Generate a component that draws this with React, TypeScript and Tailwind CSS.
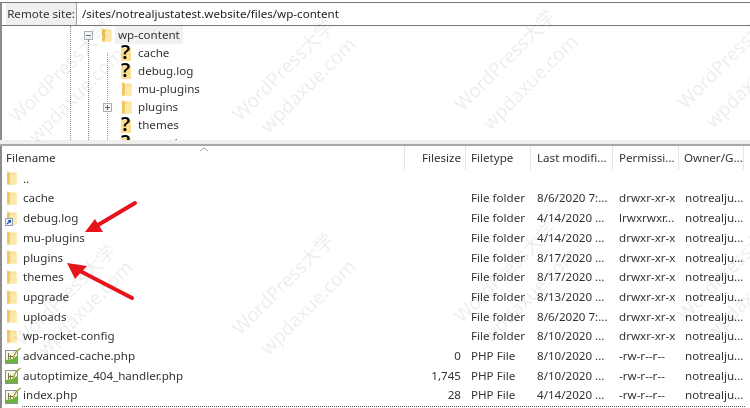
const font = { fontFamily: '"Noto Sans", "Noto Sans CJK SC", sans-serif' };

const files = [
  { name: '..', icon: 'folder' },
  { name: 'cache', icon: 'folder', type: 'File folder', date: '8/6/2020 7:...', perm: 'drwxr-xr-x' },
  { name: 'debug.log', icon: 'link', type: 'File folder', date: '4/14/2020 ...', perm: 'lrwxrwxr...' },
  { name: 'mu-plugins', icon: 'folder', type: 'File folder', date: '4/14/2020 ...', perm: 'drwxr-xr-x' },
  { name: 'plugins', icon: 'folder', type: 'File folder', date: '8/17/2020 ...', perm: 'drwxr-xr-x' },
  { name: 'themes', icon: 'folder', type: 'File folder', date: '8/17/2020 ...', perm: 'drwxr-xr-x' },
  { name: 'upgrade', icon: 'folder', type: 'File folder', date: '8/13/2020 ...', perm: 'drwxr-xr-x' },
  { name: 'uploads', icon: 'folder', type: 'File folder', date: '8/6/2020 7:...', perm: 'drwxr-xr-x' },
  { name: 'wp-rocket-config', icon: 'folder', type: 'File folder', date: '8/10/2020 ...', perm: 'drwxr-xr-x' },
  { name: 'advanced-cache.php', icon: 'php', size: '0', type: 'PHP File', date: '8/10/2020 ...', perm: '-rw-r--r--' },
  { name: 'autoptimize_404_handler.php', icon: 'php', size: '1,745', type: 'PHP File', date: '8/10/2020 ...', perm: '-rw-r--r--' },
  { name: 'index.php', icon: 'php', size: '28', type: 'PHP File', date: '4/14/2020 ...', perm: '-rw-r--r--' },
];

const tree = [
  { name: 'cache', icon: 'unknown' },
  { name: 'debug.log', icon: 'unknown' },
  { name: 'mu-plugins', icon: 'folder' },
  { name: 'plugins', icon: 'folder', plus: true },
  { name: 'themes', icon: 'unknown' },
  { name: 'upgrade', icon: 'unknown' },
];

// watermark centres
const marks = [
  [60, 72, 'WordPress大学'], [76, 95, 'wpdaxue.com'],
  [283, 70, 'WordPress大学'], [308, 85, 'wpdaxue.com'],
  [505, 60, 'WordPress大学'], [530, 82, 'wpdaxue.com'],
  [728, 58, 'WordPress大学'], [753, 80, 'wpdaxue.com'],
  [65, 295, 'WordPress大学'], [85, 308, 'wpdaxue.com'],
  [283, 284, 'WordPress大学'], [308, 307, 'wpdaxue.com'],
  [505, 272, 'WordPress大学'], [530, 295, 'wpdaxue.com'],
  [728, 270, 'WordPress大学'], [753, 292, 'wpdaxue.com'],
] as const;

function Folder() {
  return (
    <svg width="12" height="14" viewBox="0 0 12 14" className="shrink-0">
      <path d="M2 0.5 L5 1.5 H11.5 V13.5 H2 Z" fill="#fae09a" />
      <path d="M2 0.5 L5 1.5 V13.5 H2 Z" fill="#f2c85f" />
      <path d="M5 4 H11.5 V13.5 H5 Z" fill="#fce8a8" />
    </svg>
  );
}

function LinkFolder() {
  return (
    <div className="relative w-3 h-[14px] shrink-0">
      <Folder />
      <svg width="8" height="8" viewBox="0 0 8 8" className="absolute left-0 top-[7px]">
        <rect x="0.5" y="0.5" width="7" height="7" fill="#eef2fa" stroke="#8a9ac0" />
        <path d="M2 6 L5 3 M3.2 2.6 H5.4 V4.8" stroke="#1c4fb0" strokeWidth="1.2" fill="none" />
      </svg>
    </div>
  );
}

function PhpIcon() {
  return (
    <svg width="16" height="17" viewBox="0 0 16 17" className="shrink-0">
      <rect x="0.5" y="3.5" width="12" height="13" fill="#f6f6ea" stroke="#8f8f8f" />
      <path d="M1 16 V13 L7 12 L12 9 V16 Z" fill="#6fb23a" />
      <path d="M3.5 6 V12.5 M5.5 8 V12 M3 9.5 H8" stroke="#77793a" strokeWidth="1" />
      <path d="M8 11 L11 5 L15.5 1" stroke="#a3a83a" strokeWidth="1.5" fill="none" />
    </svg>
  );
}

function Unknown() {
  return (
    <div className="relative w-[13px] h-4 shrink-0">
      <div className="absolute left-[1px] top-[3px] w-[10px] h-[13px] bg-[#fbdf8f]" />
      <span className="absolute left-[1px] top-[-5px] text-[20px] leading-[24px] font-semibold text-black">?</span>
    </div>
  );
}

function Expander({ minus }: { minus?: boolean }) {
  return (
    <svg width="9" height="9" viewBox="0 0 9 9" className="shrink-0">
      <rect x="0.5" y="0.5" width="8" height="8" fill="#f4f6f8" stroke="#a9b2bb" />
      <path d={minus ? 'M2 4.5 H7' : 'M2 4.5 H7 M4.5 2 V7'} stroke="#5e6a75" strokeWidth="1" />
    </svg>
  );
}

function Column({ label, className }: { label: string; className: string }) {
  return (
    <div className={`${className} h-[24px] shrink-0 border-r border-[#e5e5e5] flex items-center`}>
      {label}
    </div>
  );
}

export default function App() {
  return (
    <div className="relative w-[750px] h-[408px] overflow-hidden bg-white text-[#333] text-[11.6px] blur-[0.3px]" style={font}>
      {/* remote site bar */}
      <div className="mt-[2px] h-[24px] flex border-t border-b border-[#777] border-l-2 border-l-[#8c8c8c]">
        <div className="w-[4px]" />
        <div className="w-[71px] bg-[#f0f0f0] flex items-center justify-center border-r border-[#a0a0a0] whitespace-nowrap">Remote site:</div>
        <div className="pl-[5px] flex items-center text-[#222]">/sites/notrealjustatest.website/files/wp-content</div>
      </div>

      {/* tree */}
      <div className="relative h-[114px] overflow-hidden border-l-2 border-l-[#8c8c8c]">
        <div className="absolute left-[68px] top-0 bottom-0 border-l border-dotted border-[#888]" />
        <div className="absolute left-[86px] top-[14px] bottom-0 border-l border-dotted border-[#888]" />
        <div className="absolute left-[105px] top-[27px] bottom-0 border-l border-dotted border-[#999]" />
        <div className="relative pl-[82px] h-[18px] flex items-center">
          <Expander minus />
          <div className="ml-[7px]"><Folder /></div>
          <span className="ml-[3px] px-[3px] h-[18px] flex items-center bg-[#f1f1f1]">wp-content</span>
        </div>
        {tree.map((t) => (
          <div key={t.name} className="relative h-[18px] flex items-center">
            <div className="w-[101px] shrink-0" />
            <div className="w-[9px] shrink-0">{t.plus && <Expander />}</div>
            <div className="w-[8px] shrink-0" />
            <div className="w-[18px] shrink-0">{t.icon === 'folder' ? <Folder /> : <Unknown />}</div>
            <span>{t.name}</span>
          </div>
        ))}
      </div>

      {/* sash */}
      <div className="h-[6px] bg-[#efefef] border-b-2 border-[#a8a8a8]" />

      {/* file list */}
      <div className="relative border-l-2 border-l-[#8c8c8c]">
        <svg width="10" height="5" viewBox="0 0 10 5" className="absolute left-[197px] top-[1px]">
          <path d="M1 4 L5 1 L9 4" stroke="#aaa" fill="none" />
        </svg>
        <div className="flex h-[24px]">
          <Column label="Filename" className="w-[403px] pl-[4px]" />
          <Column label="Filesize" className="w-[61px] justify-end pr-[4px]" />
          <Column label="Filetype" className="w-[65px] pl-[5px]" />
          <Column label="Last modifi..." className="w-[82px] pl-[6px]" />
          <Column label="Permissi..." className="w-[66px] pl-[6px]" />
          <Column label="Owner/G..." className="w-[65px] pl-[5px]" />
        </div>
        <div className="mt-[-1.4px]">
          {files.map((f) => (
            <div key={f.name} className="flex items-center h-[19.7px]">
              <div className="w-[403px] shrink-0 flex items-center pl-[3px]">
                <div className="w-[18px] shrink-0">
                  {f.icon === 'folder' && <Folder />}
                  {f.icon === 'link' && <LinkFolder />}
                  {f.icon === 'php' && <PhpIcon />}
                </div>
                <span>{f.name}</span>
              </div>
              <div className="w-[61px] shrink-0 pr-[5px] text-right">{f.size}</div>
              <div className="w-[65px] shrink-0 pl-[5px]">{f.type}</div>
              <div className="w-[82px] shrink-0 pl-[6px]">{f.date}</div>
              <div className="w-[66px] shrink-0 pl-[6px]">{f.perm}</div>
              {f.type && <div className="w-[65px] shrink-0 pl-[6px]">notrealju...</div>}
            </div>
          ))}
          <div className="mt-[1px] ml-[20px] mr-[5px] h-[4px] border-t border-dotted border-[#555]" />
        </div>
      </div>

      {/* watermarks */}
      {marks.map(([x, y, text]) => (
        <span
          key={`${x}-${y}`}
          className="absolute whitespace-nowrap text-[19px] text-[#000]/[0.07] -translate-x-1/2 -translate-y-1/2 -rotate-45 pointer-events-none"
          style={{ left: x, top: y }}
        >
          {text}
        </span>
      ))}

      {/* red arrows */}
      <svg width="750" height="408" viewBox="0 0 750 408" className="absolute inset-0 pointer-events-none">
        <path d="M135 203 L98 225" stroke="#e8141c" strokeWidth="4" strokeLinecap="round" />
        <path d="M85 232 L95 219 L103 232 Z" fill="#e8141c" />
        <path d="M132 298 L80 271" stroke="#e8141c" strokeWidth="4" strokeLinecap="round" />
        <path d="M67 263 L87 266 L75 279 Z" fill="#e8141c" />
      </svg>
    </div>
  );
}
